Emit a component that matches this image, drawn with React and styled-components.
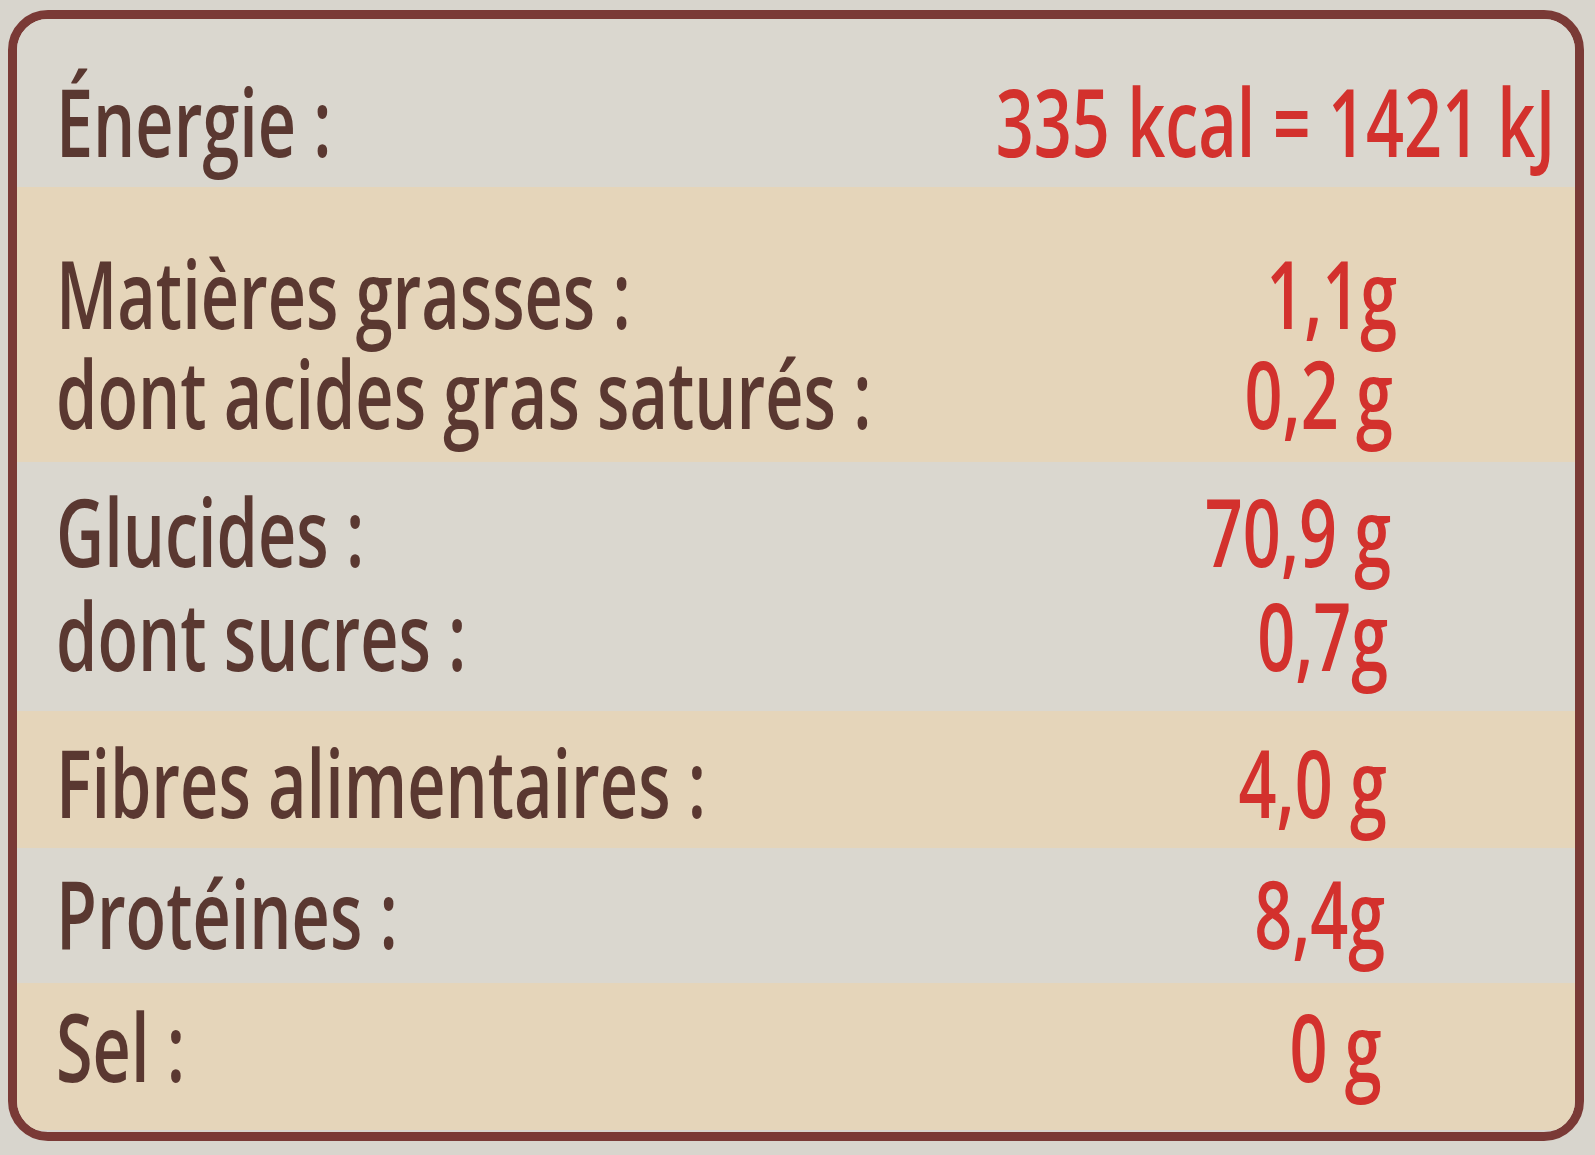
import React from "react";
import styled, { createGlobalStyle } from "styled-components";

const GlobalStyle = createGlobalStyle`
  html, body { margin: 0; padding: 0; }
  body {
    background: #d8d5cd;
    font-family: "Open Sans", "Noto Sans", "DejaVu Sans", sans-serif;
    width: 1595px;
    height: 1155px;
    overflow: hidden;
  }
`;

const Panel = styled.section`
  box-sizing: border-box;
  margin: 10px 0 0 8px;
  width: 1576px;
  height: 1131px;
  border: 9px solid #7a3a36;
  border-radius: 40px;
  overflow: hidden;
  display: flex;
  flex-direction: column;
`;

const Row = styled.div`
  box-sizing: border-box;
  height: ${(p) => p.$h}px;
  padding-top: ${(p) => p.$pad}px;
  background: ${(p) => (p.$tone === "beige" ? "#e5d5ba" : "#dad7cf")};
  display: flex;
  flex-direction: column;
  gap: ${(p) => p.$gap || 0}px;
`;

const Line = styled.div`
  display: grid;
  grid-template-columns: minmax(0, 1fr) auto;
  align-items: baseline;
  height: 92px;
  line-height: 92px;
  padding-left: 39px;
  padding-right: ${(p) => p.$right}px;
  font-size: 95px;
  font-weight: 570;
  white-space: nowrap;
`;

const Label = styled.span`
  display: block;
  min-width: 0;
  color: #5a3831;
  transform: scaleX(0.7);
  transform-origin: left center;
`;

const Value = styled.span`
  display: block;
  color: #d3312d;
  transform: scaleX(0.7);
  transform-origin: right center;
`;

const rows = [
  { tone: "light", h: 168, pad: 55, lines: [["Énergie :", "335 kcal = 1421 kJ", 20]] },
  {
    tone: "beige",
    h: 275,
    pad: 59,
    gap: 8,
    lines: [
      ["Matières grasses :", "1,1g", 178],
      ["dont acides gras saturés :", "0,2 g", 182],
    ],
  },
  {
    tone: "light",
    h: 249,
    pad: 22,
    gap: 12,
    lines: [
      ["Glucides :", "70,9 g", 184],
      ["dont sucres :", "0,7g", 187],
    ],
  },
  { tone: "beige", h: 137, pad: 24, lines: [["Fibres alimentaires :", "4,0 g", 188]] },
  { tone: "light", h: 135, pad: 18, lines: [["Protéines :", "8,4g", 190]] },
  { tone: "beige", h: 147, pad: 16, lines: [["Sel :", "0 g", 193]] },
];

export default function App() {
  return (
    <>
      <GlobalStyle />
      <Panel>
        {rows.map((r, i) => (
          <Row key={i} $tone={r.tone} $h={r.h} $pad={r.pad} $gap={r.gap}>
            {r.lines.map(([label, value, right], j) => (
              <Line key={j} $right={right}>
                <Label>{label}</Label>
                <Value>{value}</Value>
              </Line>
            ))}
          </Row>
        ))}
      </Panel>
    </>
  );
}
